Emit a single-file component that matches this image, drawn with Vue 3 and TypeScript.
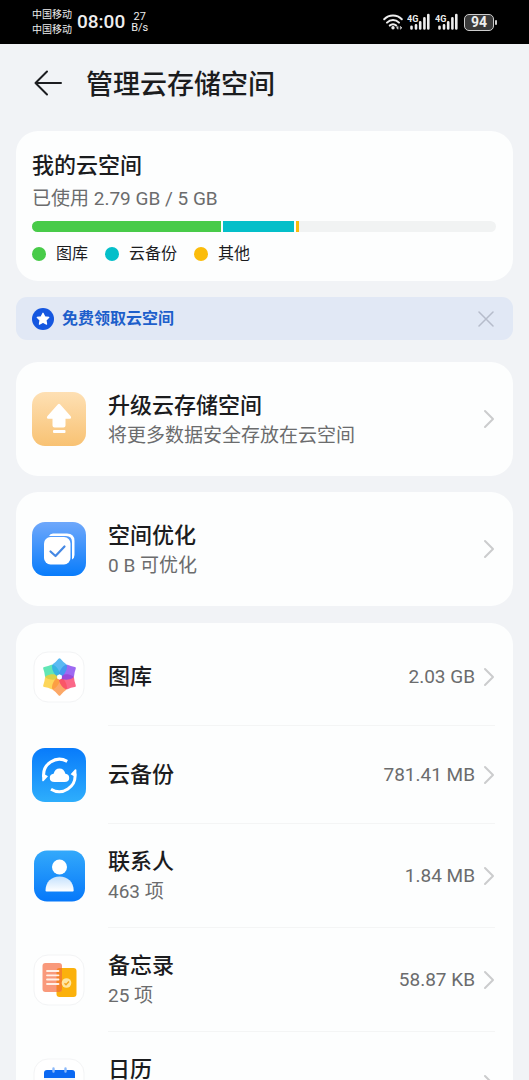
<script setup lang="ts">
import { ref } from 'vue'

interface Segment {
  label: string
  color: string
  percent: number
}

interface Entry {
  id: string
  title: string
  detail?: string
  size?: string
  twoLine: boolean
}

const segments: Segment[] = [
  { label: '图库', color: '#48cb49', percent: 40.8 },
  { label: '云备份', color: '#04bfc9', percent: 15.2 },
  { label: '其他', color: '#fbbc0b', percent: 0.6 },
]

const features = [
  { id: 'upgrade', title: '升级云存储空间', detail: '将更多数据安全存放在云空间' },
  { id: 'optimize', title: '空间优化', detail: '0 B 可优化' },
]

const entries: Entry[] = [
  { id: 'gallery', title: '图库', size: '2.03 GB', twoLine: false },
  { id: 'backup', title: '云备份', size: '781.41 MB', twoLine: false },
  { id: 'contacts', title: '联系人', detail: '463 项', size: '1.84 MB', twoLine: true },
  { id: 'notes', title: '备忘录', detail: '25 项', size: '58.87 KB', twoLine: true },
  { id: 'calendar', title: '日历', twoLine: true },
]

const petals = [
  { angle: 300, color: '#35dfa0' },
  { angle: 240, color: '#fdcb2c' },
  { angle: 180, color: '#fb8f3c' },
  { angle: 120, color: '#f83e66' },
  { angle: 60, color: '#8240ee' },
  { angle: 0, color: '#2ba6ee' },
]

const bannerOpen = ref(true)
</script>

<template>
  <div class="screen">
    <div class="status">
      <div class="carriers"><span>中国移动</span><span>中国移动</span></div>
      <span class="clock">08:00</span>
      <div class="speed"><span>27</span><span>B/s</span></div>
      <div class="indicators">
        <svg width="20" height="16" viewBox="0 0 20 16" fill="none" stroke="#eee" stroke-width="2" stroke-linecap="round">
          <path d="M1.2 5.2C6 .2 14 .2 18.800 5.200M4 8.600C7.400 5.200 12.600 5.200 16 8.600M6.800 11.600c1.800-1.700 4.600-1.700 6.400 0" />
          <circle cx="10" cy="13.800" r="1" fill="#eee" stroke-width="1.400" />
          <path d="M14.800 12.600l-1.300 1.200 1.300 1.200zM17.600 12.600l1.300 1.200-1.300 1.200z" fill="#eee" stroke-width=".6" />
        </svg>
        <svg v-for="n in 2" :key="n" class="signal" width="24" height="18" viewBox="0 0 24 18">
          <text x="0" y="9" class="net">4G</text>
          <path d="M4.500 13.700v1.800M9 12.200v3.300M13.200 9.200v6.300M17.400 5.200v10.300M21.300 2v13.500" fill="none" stroke="#eee" stroke-width="2.600" stroke-linecap="round" />
        </svg>
        <div class="battery"><span>94</span></div>
        <i class="nub"></i>
      </div>
    </div>

    <header class="header">
      <button class="plain" type="button" aria-label="返回">
        <svg width="28" height="26" viewBox="0 0 28 26" fill="none" stroke="#1c1d20" stroke-width="2" stroke-linecap="round" stroke-linejoin="round">
          <path d="M13 1.500 1.500 13 13 24.500M1.500 13H27" />
        </svg>
      </button>
      <h1>管理云存储空间</h1>
    </header>

    <main class="content">
      <section class="card usage">
        <h2>我的云空间</h2>
        <p class="used">已使用 2.79 GB / 5 GB</p>
        <div class="bar">
          <div v-for="s in segments" :key="s.label" class="segment" :style="{ width: s.percent + '%', background: s.color }"></div>
        </div>
        <ul class="legend">
          <li v-for="s in segments" :key="s.label"><i class="dot" :style="{ background: s.color }"></i>{{ s.label }}</li>
        </ul>
      </section>

      <div v-if="bannerOpen" class="banner">
        <a href="#" class="claim">
          <svg width="22" height="22" viewBox="0 0 22 22">
            <circle cx="11" cy="11" r="11" fill="#1557e0" />
            <path d="M11 5.200l1.800 3.600 4 .6-2.900 2.800.7 4L11 14.300l-3.600 1.900.7-4-2.900-2.800 4-.6z" fill="#fff" stroke="#fff" stroke-width="1.200" stroke-linejoin="round" />
          </svg>
          <span>免费领取云空间</span>
        </a>
        <button class="plain" type="button" aria-label="关闭" @click="bannerOpen = false">
          <svg width="16" height="16" viewBox="0 0 16 16" fill="none" stroke="#b6bccb" stroke-width="1.500" stroke-linecap="round"><path d="M1 1l14 14M15 1 1 15" /></svg>
        </button>
      </div>

      <button v-for="f in features" :key="f.id" type="button" class="plain card feature">
        <svg v-if="f.id === 'upgrade'" class="icon" width="54" height="54" viewBox="0 0 54 54">
          <defs><linearGradient id="gUp" x1="0" y1="0" x2="0" y2="1"><stop stop-color="#fee0b4" /><stop offset="1" stop-color="#f8c273" /></linearGradient></defs>
          <rect width="54" height="54" rx="13" fill="url(#gUp)" />
          <path d="M26 12.200q1-1 2 0L38.500 24q1.500 2.500-.8 2.800H33.500v6.700q0 2-2 2h-9q-2 0-2-2v-6.700H16.300q-2.300-.3-.8-2.800z" fill="#fff" />
          <rect x="21" y="38" width="12.500" height="3" rx="1" fill="#fff" />
        </svg>
        <svg v-else class="icon" width="54" height="54" viewBox="0 0 54 54">
          <defs><linearGradient id="gOpt" x1="0" y1="0" x2="0" y2="1"><stop stop-color="#6fa8fb" /><stop offset="1" stop-color="#087cfb" /></linearGradient></defs>
          <rect width="54" height="54" rx="13" fill="url(#gOpt)" />
          <path d="M17 14Q18 11.500 21 11.500H35Q42.500 11.500 42.500 19V33Q42.500 36 40 37.500V20Q40 14 34 14z" fill="#fff" />
          <rect x="12" y="15" width="26.500" height="27.500" rx="6.500" fill="#fff" />
          <path d="M18.500 29.500l5 4.500 9-9.500" fill="none" stroke="#4588e4" stroke-width="2.200" stroke-linecap="round" stroke-linejoin="round" />
        </svg>
        <span class="label"><span class="title">{{ f.title }}</span><span class="detail">{{ f.detail }}</span></span>
        <svg class="chevron" width="12" height="20" viewBox="0 0 12 20"><path d="M2 2l8 8-8 8" /></svg>
      </button>

      <ul class="card list">
        <li v-for="e in entries" :key="e.id">
          <button type="button" class="plain row" :class="{ tall: e.twoLine }">
            <svg v-if="e.id === 'gallery'" class="icon" width="54" height="54" viewBox="0 0 54 54">
              <rect x="2" y="2" width="50" height="50" rx="14" fill="#fff" stroke="#f3f4f5" />
              <path v-for="p in petals" :key="p.angle" class="petal" :transform="`rotate(${p.angle} 27.500 27)`" :fill="p.color" d="M27.500 28C23 25.500 20 21 20 16q0-1.200 1-2 3-2 5.500-5.200 1-1.300 2 0Q31 12 34 14q1 .8 1 2c0 5-3 9.500-7.500 12z" />
              <path d="M27.500 24.300l2.400 1.300v2.800l-2.400 1.300-2.400-1.300v-2.800z" fill="#fff" />
            </svg>
            <svg v-else-if="e.id === 'backup'" class="icon" width="54" height="54" viewBox="0 0 54 54">
              <defs><linearGradient id="gBak" x1="0" y1="0" x2="0" y2="1"><stop stop-color="#087bfb" /><stop offset="1" stop-color="#2eaefc" /></linearGradient></defs>
              <rect width="54" height="54" rx="13" fill="url(#gBak)" />
              <path d="M35.200 13.400A15.800 15.800 0 0 0 11.700 29M19 41.200A15.800 15.800 0 0 0 42.900 25.600" fill="none" stroke="#fff" stroke-width="3" />
              <path d="M10.200 27v5.800q.6 1 1.500.2L16 28.200l-3-1.800zM44.400 27.500v-5.800q-.6-1-1.500-.2l-4.300 4.800 3 1.800z" fill="#fff" />
              <path d="M22.500 34q-4.700 0-4.700-4 0-3.600 3.800-4.200 1.400-5.300 5.900-5.300t5.900 5.300q3.800.6 3.800 4.200 0 4-4.700 4z" fill="#fff" />
            </svg>
            <svg v-else-if="e.id === 'contacts'" class="icon" width="54" height="54" viewBox="0 0 54 54">
              <defs>
                <linearGradient id="gCon" x1="0" y1="0" x2="0" y2="1"><stop stop-color="#33a9fb" /><stop offset="1" stop-color="#0678fa" /></linearGradient>
                <linearGradient id="gBody" x1="0" y1="0" x2="0" y2="1"><stop stop-color="#c4e1fd" /><stop offset="1" stop-color="#fff" /></linearGradient>
              </defs>
              <rect x="2" y="1.500" width="51" height="51" rx="13" fill="url(#gCon)" />
              <circle cx="27.500" cy="18" r="7.500" fill="#fff" />
              <path d="M13.500 41.500C13.500 33 19.500 27.500 27.500 27.500S41.700 33 41.700 41.500q0 1-1 1H14.500q-1 0-1-1z" fill="url(#gBody)" />
            </svg>
            <svg v-else-if="e.id === 'notes'" class="icon" width="54" height="54" viewBox="0 0 54 54">
              <rect x="2" y="2" width="50" height="50" rx="14" fill="#fff" stroke="#f3f4f5" />
              <rect x="24.500" y="15" width="20" height="29" rx="3" fill="#fbb10c" />
              <rect x="10.500" y="10" width="19.500" height="29" rx="3" fill="#f9997b" />
              <path d="M24.500 18q0-3 3-3H30v21q0 3-3 3h-2.500z" fill="#f58328" />
              <path d="M15 18h11.500M15 22.300h11.500M15 26.500h11.500M15 31h11.500" stroke="#fff0e6" stroke-width="1.800" stroke-linecap="round" />
              <circle cx="34.500" cy="30" r="4.800" fill="#fee6a4" />
              <path d="M32.500 30.200l1.500 1.500 3-3.200" fill="none" stroke="#f5a51c" stroke-width="1.400" />
            </svg>
            <svg v-else class="icon" width="54" height="54" viewBox="0 0 54 54">
              <rect x="2" y="2" width="50" height="50" rx="14" fill="#fff" stroke="#f3f4f5" />
              <path d="M12 21v-5q0-3 3-3h25q3 0 3 3v5z" fill="#0a68f2" />
              <path d="M12 21h31v19q0 3-3 3H15q-3 0-3-3z" fill="#eef4fd" />
              <path d="M21.500 11.500v3M33.500 11.500v3" stroke="#8dbafa" stroke-width="2.400" stroke-linecap="round" />
            </svg>
            <span class="label"><span class="title">{{ e.title }}</span><span v-if="e.twoLine" class="detail">{{ e.detail }}</span></span>
            <span class="size">{{ e.size }}</span>
            <svg class="chevron" width="12" height="20" viewBox="0 0 12 20"><path d="M2 2l8 8-8 8" /></svg>
          </button>
        </li>
      </ul>
    </main>
  </div>
</template>

<style>
body {
  background: #f1f3f6;
}
</style>

<style scoped>
.screen {
  height: 100vh;
  overflow: hidden;
  display: flex;
  flex-direction: column;
  background: #f1f3f6;
  color: #1b1c1e;
  font-family: Roboto, "Noto Sans CJK SC", sans-serif;
}
h1, h2, p, ul {
  margin: 0;
  padding: 0;
  list-style: none;
}
svg {
  display: block;
  flex: none;
}
.plain {
  border: 0;
  padding: 0;
  background: none;
  font: inherit;
  color: inherit;
  text-align: left;
  cursor: pointer;
}
.status {
  flex: none;
  height: 44px;
  padding: 0 32px;
  display: flex;
  align-items: center;
  background: #000;
  color: #eee;
}
.carriers {
  display: flex;
  flex-direction: column;
  font-size: 10px;
  line-height: 15px;
}
.clock {
  margin-left: 5px;
  font-size: 19px;
  font-weight: 500;
  line-height: 24px;
}
.speed {
  margin-left: 6px;
  display: flex;
  flex-direction: column;
  align-items: center;
  font-size: 11px;
  line-height: 11px;
}
.indicators {
  margin-left: auto;
  display: flex;
  align-items: center;
}
.signal {
  margin-left: 4px;
}
.net {
  font: 700 9px Roboto, sans-serif;
  fill: #eee;
}
.battery {
  box-sizing: border-box;
  margin-left: 5px;
  width: 30px;
  height: 17px;
  border: 1px solid #ccc;
  border-radius: 5px;
  background: #3a3a3a;
  font-size: 14px;
  font-weight: 700;
  line-height: 15px;
  text-align: center;
}
.nub {
  width: 2px;
  height: 5px;
  margin-left: 1px;
  border-radius: 1px;
  background: #ccc;
}
.header {
  flex: none;
  height: 87px;
  box-sizing: border-box;
  padding: 0 34px 10px;
  display: flex;
  align-items: center;
  gap: 24px;
}
h1 {
  padding-top: 4px;
  font-size: 27px;
  font-weight: 500;
  line-height: 40px;
}
.content {
  flex: 1;
  min-height: 0;
  padding: 0 16px;
  overflow: hidden;
}
.card {
  box-sizing: border-box;
  width: 100%;
  border-radius: 22px;
  background: #fdfefe;
}
.usage {
  padding: 18px 17px 15px 16px;
}
h2 {
  font-size: 22px;
  font-weight: 500;
  line-height: 34px;
}
.used {
  color: #6b6c6d;
  font-size: 19px;
  line-height: 32px;
}
.bar {
  margin-top: 6px;
  height: 11px;
  border-radius: 6px;
  overflow: hidden;
  display: flex;
  background: #f1f3f3;
}
.segment {
  border-right: 2px solid #fdfefe;
}
.segment:last-child {
  border-right: 0;
}
.legend {
  margin-top: 10px;
  display: flex;
  gap: 17px;
  font-size: 16px;
  line-height: 24px;
}
.legend li {
  display: flex;
  align-items: center;
  gap: 10px;
}
.dot {
  width: 14px;
  height: 14px;
  border-radius: 50%;
}
.banner {
  margin-top: 16px;
  height: 43px;
  padding: 0 19px 0 16px;
  border-radius: 11px;
  display: flex;
  align-items: center;
  justify-content: space-between;
  background: #e1e8f5;
}
.claim {
  display: flex;
  align-items: center;
  gap: 8px;
  color: #1d5fcb;
  font-size: 16px;
  font-weight: 700;
  line-height: 24px;
  text-decoration: none;
}
.feature {
  height: 114px;
  margin-top: 16px;
  padding: 0 18px 0 16px;
  display: flex;
  align-items: center;
}
.banner + .feature {
  margin-top: 22px;
}
.feature .label {
  padding-top: 2px;
}
.label {
  flex: 1;
  margin-left: 22px;
  display: flex;
  flex-direction: column;
}
.title {
  font-size: 22px;
  font-weight: 500;
  line-height: 32px;
}
.detail {
  min-height: 28px;
  color: #6b6c6d;
  font-size: 19px;
  line-height: 28px;
}
.chevron {
  fill: none;
  stroke: #cbcccd;
  stroke-width: 2;
  stroke-linecap: round;
  stroke-linejoin: round;
}
.list {
  margin-top: 17px;
  padding: 5px 18px 5px 16px;
}
.row {
  width: 100%;
  height: 97px;
  display: flex;
  align-items: center;
}
.row.tall {
  height: 103px;
}
.list li + li::before {
  content: "";
  display: block;
  height: 1px;
  margin-left: 76px;
  background: #f4f5f5;
}
.size {
  margin-right: 8px;
  color: #6b6c6d;
  font-size: 19px;
  line-height: 28px;
}
.petal {
  opacity: 0.78;
}
</style>
